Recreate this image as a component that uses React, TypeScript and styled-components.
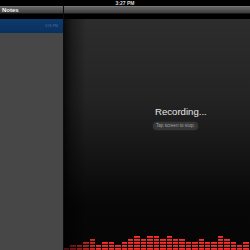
import styled, { createGlobalStyle } from 'styled-components';

const GlobalStyle = createGlobalStyle`
  html, body {
    margin: 0;
    padding: 0;
    background: #000;
    overflow: hidden;
  }
  * { box-sizing: border-box; }
`;

const Screen = styled.div`
  width: 250px;
  height: 250px;
  display: flex;
  flex-direction: column;
  background: #000;
  font-family: "Liberation Sans", Arial, sans-serif;
`;

const StatusBar = styled.div`
  height: 6px;
  display: flex;
  align-items: center;
  justify-content: center;
  color: #d8d8d8;
  font-size: 5px;
  font-weight: bold;
  line-height: 6px;
`;

const Split = styled.div`
  flex: 1;
  display: flex;
  min-height: 0;
`;

const Pane = styled.div<{ $width?: number }>`
  display: flex;
  flex-direction: column;
  ${p => (p.$width ? `width: ${p.$width}px; flex: none;` : 'flex: 1; min-width: 0;')}
`;

const Divider = styled.div`
  width: 1px;
  flex: none;
  background: #0c0c0c;
`;

const Toolbar = styled.div`
  height: 8px;
  flex: none;
  display: flex;
  align-items: center;
  padding-left: 2px;
  background: linear-gradient(to bottom, #8a8a8a 0px, #646464 1px, #4a4a4a 5px, #3c3c3c 100%);
  border-bottom: 1px solid #1a1a1a;
`;

const ToolbarTitle = styled.span`
  color: #f2f2f2;
  font-size: 6px;
  font-weight: bold;
  line-height: 8px;
`;

const Gap = styled.div`
  height: 5px;
  flex: none;
  background: #000;
`;

const NoteList = styled.div`
  flex: 1;
  background: #474747;
`;

const NoteRow = styled.div`
  height: 14px;
  display: flex;
  align-items: center;
  justify-content: flex-end;
  padding-right: 5px;
  background: linear-gradient(to bottom, #0e3a6c, #0a3060);
`;

const NoteTime = styled.span`
  color: #4f6f96;
  font-size: 3.5px;
`;

const Stage = styled.div`
  flex: 1;
  display: flex;
  flex-direction: column;
  background:
    linear-gradient(to right, rgba(0, 0, 0, 0.75) 0px, rgba(0, 0, 0, 0.35) 8px, rgba(0, 0, 0, 0) 22px),
    linear-gradient(to bottom, #2d2d2d 0%, #232323 35%, #141414 60%, #070707 80%, #050505 100%);
`;

const Message = styled.div`
  flex: 1;
  display: flex;
  flex-direction: column;
  align-items: flex-start;
  padding: 87px 0 0 91px;
  gap: 5px;
`;

const Title = styled.div`
  color: #e6e6e6;
  font-size: 9.6px;
  line-height: 11px;
`;

const Hint = styled.div`
  margin-left: -2px;
  color: #a0a0a0;
  font-size: 4.6px;
  line-height: 8px;
  padding: 0 3px;
  border-radius: 4px;
  background: #363636;
  box-shadow: 0 0 2px rgba(80, 80, 80, 0.5);
`;

const Meter = styled.div`
  height: 16px;
  display: flex;
  align-items: flex-end;
`;

const Column = styled.div`
  flex: 1;
  display: flex;
  flex-direction: column-reverse;
  gap: 1px;
  border-right: 1px solid rgba(0, 0, 0, 0.3);
`;

const Segment = styled.div`
  height: 2px;
  background: linear-gradient(to bottom, #ff3a34, #d01a1a);
`;

const levels = [1, 2, 2, 3, 4, 2, 3, 3, 2, 3, 4, 5, 4, 5, 5, 4, 5, 4, 4, 3, 3, 4, 3, 3, 5, 4, 3, 2, 3];

export default function App() {
  return (
    <>
      <GlobalStyle />
      <Screen>
        <StatusBar>3:27 PM</StatusBar>
        <Split>
          <Pane $width={63}>
            <Toolbar>
              <ToolbarTitle>Notes</ToolbarTitle>
            </Toolbar>
            <Gap />
            <NoteList>
              <NoteRow>
                <NoteTime>3:26 PM</NoteTime>
              </NoteRow>
            </NoteList>
          </Pane>
          <Divider />
          <Pane>
            <Toolbar />
            <Gap />
            <Stage>
              <Message>
                <Title>Recording...</Title>
                <Hint>Tap screen to stop.</Hint>
              </Message>
              <Meter>
                {levels.map((lvl, i) => (
                  <Column key={i} style={{ opacity: Math.min(1, 0.3 + i * 0.14) }}>
                    {Array.from({ length: lvl }).map((_, j) => (
                      <Segment key={j} />
                    ))}
                  </Column>
                ))}
              </Meter>
            </Stage>
          </Pane>
        </Split>
      </Screen>
    </>
  );
}
